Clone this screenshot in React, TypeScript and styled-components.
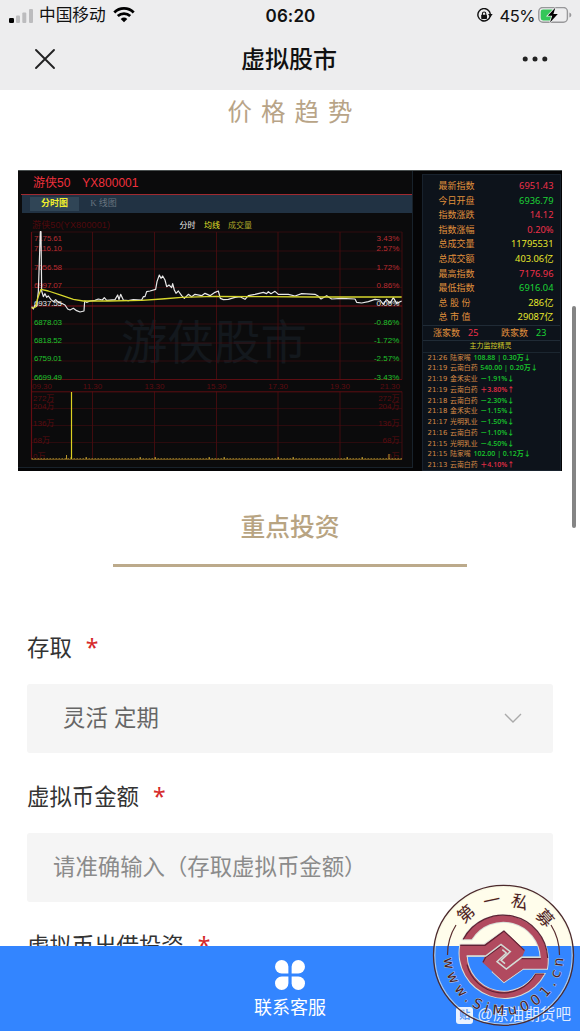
import React from 'react';
import styled, { createGlobalStyle } from 'styled-components';

const GlobalStyle = createGlobalStyle`
  * { box-sizing: border-box; }
  body {
    margin: 0;
    background-color: #fff;
    font-family: "Liberation Sans", "Noto Sans CJK SC", sans-serif;
  }
`;

const Page = styled.div`
  position: relative;
  display: flex;
  flex-direction: column;
  width: 580px;
  height: 1031px;
  overflow: hidden;
  background-color: #fff;
`;

const Top = styled.header`
  flex: none;
  height: 90px;
  background-color: #ededee;
`;

const StatusBar = styled.div`
  display: grid;
  grid-template-columns: 1fr auto 1fr;
  align-items: center;
  height: 30px;
  padding: 0 8px 0 9px;
  color: #111;
`;

const Carrier = styled.div`
  display: flex;
  align-items: center;
  font-size: 16.7px;
  line-height: 30px;

  span { margin: 1px 7px 0 5px; }
`;

const Clock = styled.div`
  font: 600 17px/30px Inter, sans-serif;
  letter-spacing: .1px;
`;

const Power = styled.div`
  display: flex;
  align-items: center;
  justify-content: flex-end;
  font: 400 16.5px/30px Inter, sans-serif;
  letter-spacing: -.5px;

  span { margin: 0 3px 0 7px; }
`;

const NavBar = styled.div`
  display: flex;
  align-items: center;
  justify-content: space-between;
  height: 58px;
  padding: 0 32px 0 34px;
`;

const NavTitle = styled.h1`
  margin: 2px 0 0;
  font-size: 24px;
  font-weight: 500;
  line-height: 36px;
  color: #111;
`;

const Content = styled.main`
  flex: 1;
  min-height: 0;
  overflow: hidden;
`;

const TrendTitle = styled.h2`
  height: 80px;
  margin: 0;
  padding: 5px 0 0 9px;
  font-size: 24.5px;
  font-weight: 400;
  line-height: 36px;
  letter-spacing: 9px;
  text-align: center;
  color: #b8a487;
`;

const Board = styled.section`
  display: flex;
  width: 544px;
  height: 301px;
  margin-left: 18px;
  border-top: 1px solid #4a5050;
  background-color: #050506;
`;

const ChartPanel = styled.div`
  flex: none;
  width: 395px;
  height: 297px;
  padding-left: 3px;
  border-right: 1px solid #18222b;
  border-bottom: 1px solid #18222b;
  background-color: #0b0b0c;
`;

const StockName = styled.div`
  height: 24px;
  padding-left: 12px;
  border-bottom: 1px solid #a02a30;
  font-size: 12px;
  line-height: 25px;
  color: #f0303c;

  span { margin-left: 12px; }
`;

const ChartTabs = styled.div`
  display: flex;
  align-items: center;
  height: 18px;
  margin-left: 1px;
  padding-left: 8px;
  background-color: #213243;
`;

const ChartTab = styled.div<{ $active?: boolean }>`
  width: 49px;
  height: 14px;
  font-family: "Liberation Serif", "Noto Sans CJK SC", serif;
  font-size: 9px;
  font-weight: ${({ $active }) => ($active ? 700 : 400)};
  line-height: 13px;
  text-align: center;
  color: ${({ $active }) => ($active ? '#f1f02c' : '#67737e')};
  background-color: ${({ $active }) => ($active ? '#304556' : 'transparent')};
`;

const Side = styled.aside`
  width: 139px;
  height: 297px;
  margin: 3px 0 0 9px;
  border: 1px solid #18222d;
  background-color: #0d131b;
  overflow: hidden;
`;

const Stats = styled.div`
  height: 150px;
  padding: 4px 6.5px 0 15.5px;
`;

const StatRow = styled.div<{ $color: string }>`
  display: flex;
  justify-content: space-between;
  height: 14.6px;
  font-size: 9px;
  line-height: 14.6px;
  color: #e0903c;

  b {
    font-family: "Noto Sans", "Noto Sans CJK SC", sans-serif;
    font-size: 9.3px;
    font-weight: 400;
    color: ${({ $color }) => $color};
  }
`;

const Counters = styled.div`
  display: flex;
  height: 16px;
  padding-left: 10px;
  border: solid #202b36;
  border-width: 1px 0;
  font: 400 9px/14px "Noto Sans", "Noto Sans CJK SC", sans-serif;
  color: #e0903c;
  white-space: nowrap;
`;

const Counter = styled.div<{ $color: string }>`
  width: 68px;
  flex: none;

  b {
    margin-left: 8px;
    font-weight: 400;
    color: ${({ $color }) => $color};
  }
`;

const FeedTitle = styled.div`
  height: 11.5px;
  padding-right: 2px;
  border-bottom: 1px solid #1b2630;
  font-size: 7px;
  line-height: 10px;
  text-align: center;
  color: #d3cf2a;
`;

const FeedRow = styled.div<{ $up?: boolean }>`
  display: flex;
  gap: 2.7px;
  height: 10.78px;
  padding-left: 4.5px;
  font: 400 6.9px/10px "DejaVu Sans", "Noto Sans CJK SC", sans-serif;
  white-space: pre;
  color: #d58a45;

  b {
    font-weight: 600;
    font-family: "Open Sans", "Noto Sans CJK SC", sans-serif;
    font-size: 7px;
    color: ${({ $up }) => ($up ? '#e12d45' : '#18c32c')};
  }
`;

const InvestTitle = styled.h2`
  width: 354px;
  height: 96px;
  margin: 0 auto;
  padding-top: 39px;
  border-bottom: 3px solid #bcaa8b;
  font-size: 24.8px;
  font-weight: 500;
  line-height: 36px;
  text-align: center;
  color: #b8a482;
`;

const Form = styled.form`
  padding: 64px 27px 0;
`;

const Label = styled.label`
  display: flex;
  height: 53px;
  font-size: 22.4px;
  line-height: 35px;
  color: #333;

  i {
    margin: -1px 0 0 14px;
    font: 400 23px/34px "Noto Sans", sans-serif;
    font-style: normal;
    color: #d62a2a;
  }
`;

const Field = styled.div<{ $placeholder?: boolean }>`
  display: flex;
  align-items: center;
  justify-content: space-between;
  height: 69px;
  margin-bottom: 27px;
  padding: 0 31px 5px ${({ $placeholder }) => ($placeholder ? '26px' : '36px')};
  border-radius: 3px;
  font-size: 22.4px;
  color: ${({ $placeholder }) => ($placeholder ? '#8b8b8b' : '#666')};
  background-color: #f5f5f5;

  svg { margin-top: 4px; }
`;

const ServiceBar = styled.footer`
  flex: none;
  display: flex;
  flex-direction: column;
  align-items: center;
  height: 85px;
  padding-top: 14px;
  font-size: 18px;
  line-height: 26px;
  color: #fff;
  background-color: #3385ff;

  svg { flex: none; margin-bottom: 5px; }
`;

const ScrollThumb = styled.div`
  position: absolute;
  top: 306px;
  right: 4px;
  width: 4.5px;
  height: 222px;
  border-radius: 3px;
  background-color: #858585;
`;

const ForumMark = styled.div`
  position: absolute;
  right: 9px;
  bottom: 4px;
  display: flex;
  align-items: center;
  gap: 4px;
  font-size: 15.6px;
  line-height: 24px;
  color: rgba(255, 255, 255, .85);

  em {
    width: 17px;
    height: 17px;
    border-radius: 3px;
    font-size: 11px;
    font-style: normal;
    font-weight: 700;
    line-height: 16px;
    text-align: center;
    color: #5a9af5;
    background-color: #eaf2ff;
  }
`;

const Stamp = styled.svg`
  position: absolute;
  right: 4px;
  bottom: 4px;
`;

const RED = '#f0304a';
const GREEN = '#1cd436';
const YELLOW = '#e6e62c';

const stats = [
  ['最新指数', '6951.43', RED],
  ['今日开盘', '6936.79', GREEN],
  ['指数涨跌', '14.12', RED],
  ['指数涨幅', '0.20%', RED],
  ['总成交量', '11795531', YELLOW],
  ['总成交额', '403.06亿', YELLOW],
  ['最高指数', '7176.96', RED],
  ['最低指数', '6916.04', GREEN],
  ['总 股 份', '286亿', YELLOW],
  ['总 市 值', '29087亿', YELLOW],
];

const feed: { time: string; name: string; value: string; up?: boolean }[] = [
  { time: '21:26', name: '陆家嘴', value: '108.88 | 0.30万↓' },
  { time: '21:19', name: '云南白药', value: '540.00 | 0.20万↓' },
  { time: '21:19', name: '金禾实业', value: '－1.91%↓' },
  { time: '21:19', name: '云南白药', value: '＋3.80%↑', up: true },
  { time: '21:18', name: '云南白药', value: '－2.30%↓' },
  { time: '21:18', name: '金禾实业', value: '－1.15%↓' },
  { time: '21:17', name: '光明乳业', value: '－1.50%↓' },
  { time: '21:16', name: '云南白药', value: '－1.10%↓' },
  { time: '21:15', name: '光明乳业', value: '－4.50%↓' },
  { time: '21:15', name: '陆家嘴', value: '102.00 | 0.12万↓' },
  { time: '21:13', name: '云南白药', value: '＋4.10%↑', up: true },
];

const gridX = [31.5, 92.5, 154.5, 216.5, 278, 340, 402];
const gridY = [232, 251, 269, 287.5, 324, 343, 361];
const volumeY = [408.5, 425.5, 442.5];

const levels = [
  { y: 241, price: '7175.61', rate: '3.43%', color: '#b92d32' },
  { y: 251, price: '7116.10', rate: '2.57%', color: '#b92d32' },
  { y: 269.5, price: '7056.58', rate: '1.72%', color: '#b92d32' },
  { y: 287.8, price: '6997.07', rate: '0.86%', color: '#b92d32' },
  { y: 306, price: '6937.55', rate: '0.00%', color: '#e6e6e6' },
  { y: 324.5, price: '6878.03', rate: '-0.86%', color: '#1fc22c' },
  { y: 343, price: '6818.52', rate: '-1.72%', color: '#1fc22c' },
  { y: 361.3, price: '6759.01', rate: '-2.57%', color: '#1fc22c' },
  { y: 379.7, price: '6699.49', rate: '-3.43%', color: '#1fc22c' },
];

const volumes = [
  { y: 401, text: '272万' },
  { y: 409, text: '204万' },
  { y: 425.5, text: '136万' },
  { y: 442.5, text: '68万' },
  { y: 458.5, text: '0万' },
];

const times = ['09.30', '11.30', '13.30', '15.30', '17.30', '19.30', '21.30'];

const priceLine =
  '50,425 55,432 60,420 65,424 70,380 76,200 78,200 80,378 85,395 90,386 95,397 100,393 108,404 115,410 122,404 130,412 140,415 150,420 158,432 165,435 175,430 185,437 195,441 207,438 209,408 215,412 225,408 240,406 250,402 262,405 268,398 275,406 300,404 308,390 312,404 317,388 325,405 340,407 355,404 380,405 385,395 390,395 395,380 405,378 422,373 426,350 433,330 438,340 443,333 450,345 455,365 462,360 470,368 473,356 478,375 483,385 490,378 500,392 508,400 520,388 530,395 540,388 560,392 570,385 585,392 600,382 610,378 616,400 625,404 640,403 660,397 675,395 690,403 700,392 720,388 745,382 755,386 760,380 768,386 780,379 790,388 820,388 840,393 860,386 900,388 908,392 918,402 935,392 950,402 980,400 1020,402 1025,412 1040,414 1060,410 1080,403 1095,405 1105,418 1115,403 1125,415 1135,398 1145,415 1160,408';

const averageLine =
  '50,430 62,426 68,400 78,373 100,378 140,391 175,403 205,408 280,408 380,406 440,402 500,397 600,394 740,395 900,396 1160,396';

// low volume ticks along the base of the lower chart
const ticks = Array.from({ length: 124 }, (_, i) => ({
  x: 31.5 + i * 3,
  h: (i * 37) % 23 > 20 ? 1.8 : 0.6,
}));

const TrendChart = () => (
  <svg width="391" height="254" viewBox="21 213 391 254" fontFamily="Liberation Sans, Noto Sans CJK SC, sans-serif">
    <text x="121" y="359" fontSize="46.5" fill="#13181d">游侠股市</text>
    <g stroke="#470c10" strokeWidth=".9" fill="none">
      {gridX.map((x) => <path key={x} d={`M${x} 232V379.5M${x} 391.5V459.5`} />)}
      {gridY.map((y) => <path key={y} d={`M31.5 ${y}H402`} opacity=".7" />)}
      {volumeY.map((y) => <path key={y} d={`M31.5 ${y}H402`} opacity=".6" />)}
      <path d="M31.5 379.5H402M31.5 391.8H402" stroke="#650d13" />
      <path d="M31.5 306H402" stroke="#8d1119" />
      <path d="M31.5 232V459" stroke="#650d13" strokeWidth="1.2" />
    </g>
    <text x="32" y="228" fontSize="9" fill="#50090c" textLength="78">游侠50(YX800001)</text>
    <g fontSize="8">
      <text x="179.5" y="228" fill="#eee">分时</text>
      <text x="204" y="228" fill="#e2e22a">均线</text>
      <text x="228" y="228" fill="#aaa728">成交量</text>
      {levels.map(({ y, price, rate, color }) => (
        <g key={price} fill={color}>
          <text x="34" y={y} textLength="28">{price}</text>
          <text x="399.3" y={y} textAnchor="end">{rate}</text>
        </g>
      ))}
      <g fill="#5c0b10">
        {times.map((t, i) => (
          <text
            key={t}
            x={i === 0 ? 32 : i === 6 ? 400 : gridX[i]}
            y="388.5"
            textAnchor={i === 0 ? 'start' : i === 6 ? 'end' : 'middle'}
          >
            {t}
          </text>
        ))}
        {volumes.map(({ y, text }) => (
          <g key={text}>
            <text x="33" y={y}>{text}</text>
            <text x="399.5" y={y} textAnchor="end">{text}</text>
          </g>
        ))}
      </g>
    </g>
    <g transform="translate(15 165) scale(.33333)" fill="none" strokeLinejoin="round">
      <polyline points={priceLine} stroke="#e8e8e8" strokeWidth="3.6" />
      <polyline points={averageLine} stroke="#d6d62c" strokeWidth="3.9" />
    </g>
    <path d="M31.5 459.3H402" stroke="#a57b25" strokeWidth=".8" />
    <g fill="#b6952d">
      {ticks.map(({ x, h }) => <rect key={x} x={x} y={459 - h} width="1.5" height={h} />)}
      <rect x="66" y="455" width="1" height="4" />
      <rect x="388.5" y="454" width="1" height="5" />
    </g>
    <rect x="70.9" y="392" width="1.2" height="67" fill="#dcd021" />
  </svg>
);

const SignalIcon = () => (
  <svg width="25" height="16" viewBox="0 0 25 16">
    <rect x="0" y="10" width="5" height="5" rx="1.2" fill="#000" />
    <g fill="#bcbcbe">
      <rect x="7" y="7.5" width="4" height="7.5" rx="1" />
      <rect x="13.3" y="4.5" width="4" height="10.5" rx="1" />
      <rect x="20" y="1" width="4" height="14" rx="1" />
    </g>
  </svg>
);

const WifiIcon = () => (
  <svg width="22" height="17" viewBox="0 0 22 17" fill="none" stroke="#000" strokeWidth="2.8">
    <path d="M1.3 5.4C6.7.1 15.3.1 20.7 5.4" />
    <path d="M4.8 9C8.3 5.7 13.7 5.7 17.2 9" />
    <path d="M7.7 11.9Q11 9.2 14.3 11.9L11 15.2Z" fill="#000" stroke="none" />
  </svg>
);

const RotationLockIcon = () => (
  <svg width="16" height="15" viewBox="0 0 16 15">
    <path d="M11.5 2.4A6.2 6.2 0 1 0 13.2 7.8M11.5 2.4A6.2 6.2 0 0 1 13.3 6" fill="none" stroke="#111" strokeWidth="1.4" />
    <path d="M11 6H15.6L13.4 9.4Z" fill="#111" />
    <rect x="4.2" y="6.7" width="5.8" height="4.3" rx=".7" fill="#111" />
    <path d="M5.4 7V5.7a1.7 1.7 0 0 1 3.4 0V7" fill="none" stroke="#111" strokeWidth="1.1" />
  </svg>
);

const BatteryIcon = () => (
  <svg width="34" height="18" viewBox="0 0 34 18">
    <rect x=".8" y=".5" width="28.6" height="14.8" rx="4" fill="none" stroke="#98989a" strokeWidth="1.4" />
    <path d="M5 2.4H14.5V13.4H5Q2.7 13.4 2.7 11V4.8Q2.7 2.4 5 2.4Z" fill="#35c759" />
    <path d="M31.4 5.5Q33.4 6.2 33.4 8T31.4 10.5Z" fill="#98989a" />
    <path d="M17.3 .8L9.8 8.8H14.2L12 15.5L19.8 6.9H15.4Z" fill="#000" stroke="#ededee" strokeWidth="1.6" paintOrder="stroke" />
  </svg>
);

const CloseIcon = () => (
  <svg width="22" height="22" viewBox="0 0 22 22" stroke="#222" strokeWidth="1.9" strokeLinecap="round">
    <path d="M2 2L20 20M20 2L2 20" />
  </svg>
);

const MoreIcon = () => (
  <svg width="26" height="6" viewBox="0 0 26 6" fill="#222">
    <circle cx="3.2" cy="3" r="2.5" />
    <circle cx="13" cy="3" r="2.5" />
    <circle cx="22.8" cy="3" r="2.5" />
  </svg>
);

const ChevronIcon = () => (
  <svg width="18" height="11" viewBox="0 0 18 11" fill="none" stroke="#aaa" strokeWidth="1.4">
    <path d="M1 1L9 9L17 1" />
  </svg>
);

const PetalsIcon = () => (
  <svg width="30" height="30" viewBox="0 0 30 30" fill="#fff">
    <path d="M6.7 0A6.7 6.7 0 0 0 6.7 13.4H13.4V6.7A6.7 6.7 0 0 0 6.7 0Z" />
    <path d="M23.3 0A6.7 6.7 0 0 1 23.3 13.4H16.6V6.7A6.7 6.7 0 0 1 23.3 0Z" />
    <path d="M6.7 30A6.7 6.7 0 0 1 6.7 16.6H13.4V23.3A6.7 6.7 0 0 1 6.7 30Z" />
    <path d="M23.3 30A6.7 6.7 0 0 0 23.3 16.6H16.6V23.3A6.7 6.7 0 0 0 23.3 30Z" />
  </svg>
);

// ring end, bar and the outer edge of the knot; the other half is its 180 degree turn
const halfKnot =
  'M24 94A135 135 0 0 1 276 182H204L147 222L114 192L138 169L124 158L154 184L196 149H257A112 112 0 0 0 50 94Z';

const knotLine = 'M35 144H92L138 109L166 131L138 157L150 167';

const stampChars = [
  { char: '第', angle: -42 },
  { char: '一', angle: -12 },
  { char: '私', angle: 17 },
  { char: '募', angle: 48 },
];

const CompanyStamp = () => (
  <Stamp width="145" height="145" viewBox="431 882 145 145">
    <defs>
      <path id="rim" d="M443.6 955.3A59.9 59.9 0 0 0 563.4 955.3" />
    </defs>
    <path d="M434.1 946A70 70 0 0 1 572.9 946Z" fill="#fffdeb" />
    <circle cx="503.5" cy="955.3" r="68.8" fill="none" stroke="#f4f3df" strokeOpacity=".6" strokeWidth="1.4" />
    <circle cx="503.5" cy="955.3" r="70" fill="none" stroke="#4c2a2c" strokeWidth="1.3" />
    <path d="M447.5 955A56 56 0 0 1 456 925M559.5 955A56 56 0 0 0 551 925" fill="none" stroke="#5a2f30" strokeWidth="1.2" />
    <g transform="translate(455 908) scale(.33333)">
      <g fill="#b14a5f" stroke="#d8dfd8" strokeWidth="6" paintOrder="stroke">
        <path d={halfKnot} />
        <path d={halfKnot} transform="rotate(180 146 146)" />
      </g>
      <path d="M90 111L147 68L210 127L200 150L204 182L147 222L82 163L90 143Z" fill="#b14a5f" />
      <g fill="none" stroke="#5e2233" strokeWidth="3.5">
        <path d="M25 94A134 134 0 0 1 278 150" />
        <path d="M16 112H90L147 69L208 127" />
        <path d="M84 163L92 148L138 114" />
        <path d="M196 152H257" />
        <path d="M36 170A112 112 0 0 0 242 198H268" />
      </g>
      <g fill="none" stroke="#d3dcd6" strokeWidth="4.5">
        <path d={knotLine} />
        <path d={knotLine} transform="rotate(180 146 146)" />
      </g>
    </g>
    <g fill="#4d2020" stroke="#f1eedc" strokeWidth="1" strokeOpacity=".6" paintOrder="stroke">
      <g fontFamily="Noto Sans CJK SC, sans-serif" fontSize="17" textAnchor="middle">
        {stampChars.map(({ char, angle }) => (
          <text key={char} transform={`rotate(${angle} 503.5 955.3)`} x="503.5" y="905.5">{char}</text>
        ))}
      </g>
      <text fontFamily="DejaVu Sans, sans-serif" fontSize="14">
        <textPath href="#rim" startOffset="3" textLength="182" lengthAdjust="spacing">www.SiMu001.cn</textPath>
      </text>
    </g>
  </Stamp>
);

export default function App() {
  return (
    <Page>
      <GlobalStyle />
      <Top>
        <StatusBar>
          <Carrier><SignalIcon /><span>中国移动</span><WifiIcon /></Carrier>
          <Clock>06:20</Clock>
          <Power><RotationLockIcon /><span>45%</span><BatteryIcon /></Power>
        </StatusBar>
        <NavBar>
          <CloseIcon />
          <NavTitle>虚拟股市</NavTitle>
          <MoreIcon />
        </NavBar>
      </Top>

      <Content>
        <TrendTitle>价格趋势</TrendTitle>
        <Board>
          <ChartPanel>
            <StockName>游侠50<span>YX800001</span></StockName>
            <ChartTabs>
              <ChartTab $active>分时图</ChartTab>
              <ChartTab>K 线图</ChartTab>
            </ChartTabs>
            <TrendChart />
          </ChartPanel>
          <Side>
            <Stats>
              {stats.map(([name, value, color]) => (
                <StatRow key={name} $color={color}>{name}<b>{value}</b></StatRow>
              ))}
            </Stats>
            <Counters>
              <Counter $color={RED}>涨家数<b>25</b></Counter>
              <Counter $color={GREEN}>跌家数<b>23</b></Counter>
            </Counters>
            <FeedTitle>主力监控精灵</FeedTitle>
            {feed.map(({ time, name, value, up }, i) => (
              <FeedRow key={i} $up={up}><span>{time}</span><span>{name}</span><b>{value}</b></FeedRow>
            ))}
          </Side>
        </Board>

        <InvestTitle>重点投资</InvestTitle>
        <Form>
          <Label>存取<i>*</i></Label>
          <Field>灵活 定期<ChevronIcon /></Field>
          <Label>虚拟币金额<i>*</i></Label>
          <Field $placeholder>请准确输入（存取虚拟币金额）</Field>
          <Label>虚拟币出借投资<i>*</i></Label>
        </Form>
      </Content>

      <ServiceBar>
        <PetalsIcon />
        联系客服
      </ServiceBar>

      <ScrollThumb />
      <ForumMark><em>贴</em>@原油期货吧</ForumMark>
      <CompanyStamp />
    </Page>
  );
}
